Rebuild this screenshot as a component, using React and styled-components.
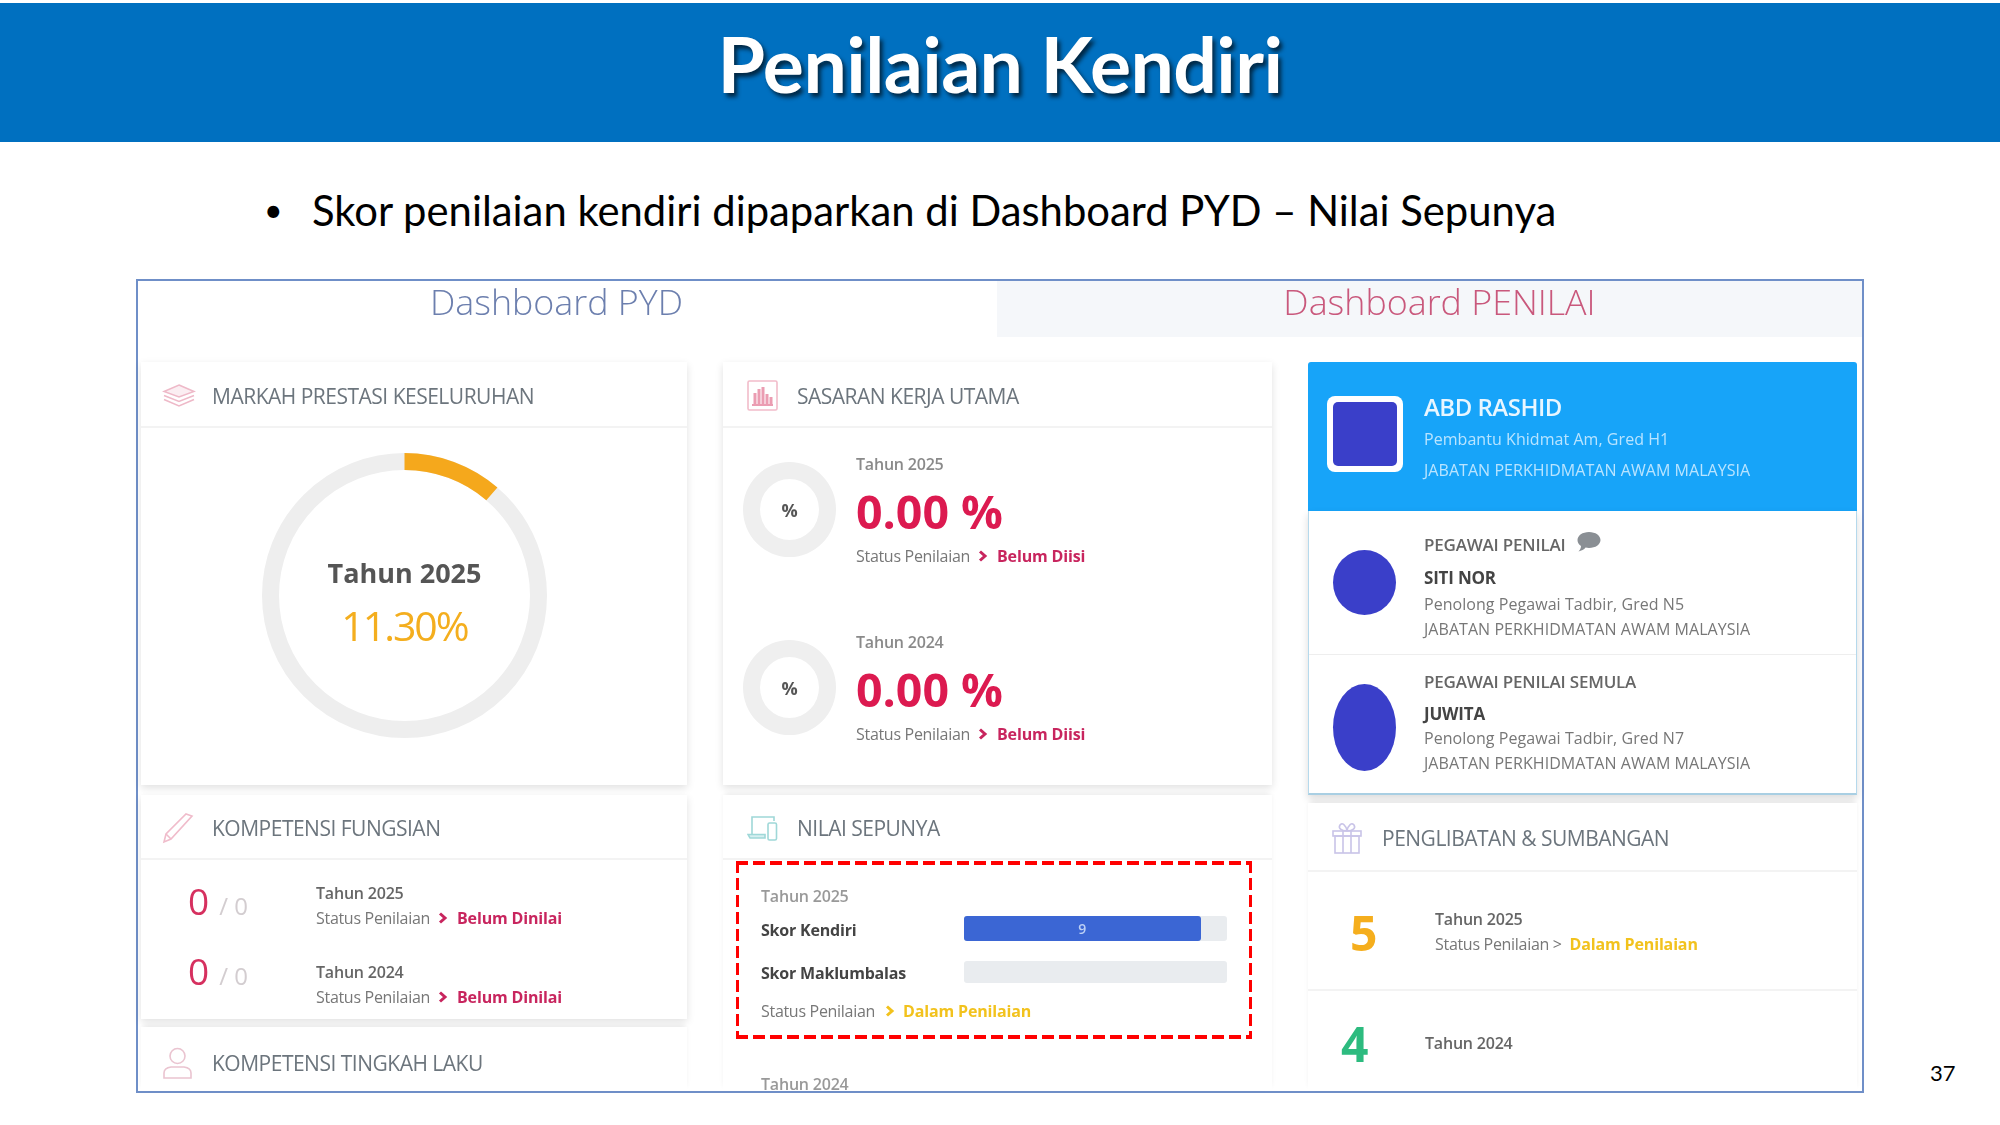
import styled, { createGlobalStyle } from 'styled-components';

const GlobalStyle = createGlobalStyle`
  html, body {
    margin: 0;
    padding: 0;
    background: #fff;
  }
  * {
    box-sizing: border-box;
  }
`;

const UI_FONT = '"Open Sans", "Noto Sans", sans-serif';
const SLIDE_FONT = 'Lato, "Open Sans", sans-serif';

const Page = styled.div`
  width: 2000px;
  height: 1125px;
  overflow: hidden;
  background: #fff;
  padding-top: 3px;
  font-family: ${UI_FONT};
`;

const TitleBar = styled.header`
  height: 139px;
  background: #0070c0;
  display: flex;
  justify-content: center;
  align-items: center;
  padding-bottom: 20px;
`;

const SlideTitle = styled.h1`
  margin: 0;
  font-family: ${SLIDE_FONT};
  font-size: 77px;
  font-weight: 700;
  letter-spacing: -0.6px;
  color: #fff;
  text-shadow: 3px 4px 4px rgba(0, 0, 0, 0.65);
`;

const BulletRow = styled.div`
  height: 137px;
  padding: 43px 0 0 264px;
  display: flex;
  font-family: ${SLIDE_FONT};
  font-size: 41.8px;
  line-height: 50px;
  color: #000;
`;

const BulletDot = styled.span`
  width: 48px;
  font-size: 32px;
`;

const BottomRow = styled.div`
  display: flex;
  align-items: flex-end;
  padding-left: 136px;
`;

const Frame = styled.section`
  width: 1728px;
  height: 814px;
  border: 2px solid #6f8fc8;
  background: #fff;
`;

const TabRow = styled.div`
  display: flex;
  height: 56px;
  filter: blur(0.4px);
`;

const Tab = styled.div`
  font-weight: 300;
  font-size: 35.8px;
  line-height: 40px;
  text-align: center;
  color: ${(p) => (p.$active ? '#6c7fae' : '#c9587c')};
  background: ${(p) => (p.$active ? '#fff' : '#f5f7fa')};
  width: ${(p) => (p.$active ? '859px' : '865px')};
  padding-right: ${(p) => (p.$active ? '22px' : '0')};
  padding-left: ${(p) => (p.$active ? '0' : '20px')};
`;

const Board = styled.div`
  display: grid;
  grid-template-columns: 546px 549px 549px;
  column-gap: 36px;
  height: 754px;
  padding: 25px 0 0 3px;
  filter: blur(0.4px);
`;

const Column = styled.div`
  display: flex;
  flex-direction: column;
`;

/* $flush cards run into the bottom edge of the frame, so their shadow must stay inside it */
const Card = styled.div`
  background: #fff;
  box-shadow: ${(p) => (p.$flush ? '0 -3px 6px -2px rgba(0, 0, 0, 0.1)' : '0 3px 8px rgba(0, 0, 0, 0.12)')};
  flex: none;
  height: ${(p) => p.$height}px;
  margin-top: ${(p) => p.$top || 0}px;
`;

const CardHeader = styled.div`
  height: ${(p) => p.$height}px;
  display: flex;
  align-items: center;
  padding: ${(p) => p.$pad || 3}px 0 0 ${(p) => p.$inset || 24}px;
  border-bottom: ${(p) => (p.$open ? '0' : '2px solid #f3f3f3')};
`;

const IconSlot = styled.span`
  width: 50px;
  flex: none;
  display: flex;
`;

const CardTitle = styled.h3`
  margin: 0;
  font-size: 21px;
  font-weight: 400;
  letter-spacing: -0.5px;
  color: #6c757d;
`;

/* overall score */
const RingWrap = styled.div`
  display: grid;
  width: 285px;
  height: 285px;
  margin: 25px 0 0 121px;
`;

const RingSvg = styled.svg`
  grid-area: 1 / 1;
`;

const RingLabel = styled.div`
  grid-area: 1 / 1;
  place-self: center;
  padding-top: 12px;
  text-align: center;
`;

const RingYear = styled.div`
  font-size: 27px;
  font-weight: 700;
  line-height: 40px;
  color: #555;
`;

const RingValue = styled.div`
  font-size: 41px;
  font-weight: 500;
  line-height: 52px;
  margin-top: 6px;
  letter-spacing: -2px;
  color: #f4ae1e;
`;

/* sasaran kerja */
const TargetList = styled.div`
  padding-top: 24px;
`;

const TargetRow = styled.div`
  display: flex;
  height: 178px;
  padding-left: 20px;
`;

const SmallRing = styled.div`
  width: 93px;
  height: 95px;
  margin-top: 10px;
  border-radius: 50%;
  border: 17px solid #efefef;
  display: flex;
  align-items: center;
  justify-content: center;
  font-size: 18px;
  font-weight: 700;
  color: #555;
  flex: none;
`;

const TargetText = styled.div`
  padding-left: 20px;
`;

const YearLabel = styled.div`
  font-size: 16px;
  font-weight: 600;
  line-height: ${(p) => p.$lineHeight || 24}px;
  letter-spacing: -0.2px;
  color: ${(p) => p.$color || '#666'};
`;

const BigPercent = styled.div`
  font-size: 46.5px;
  font-weight: 700;
  line-height: 56px;
  margin-top: 7px;
  color: #dc1a50;
`;

const StatusLine = styled.div`
  display: flex;
  align-items: center;
  font-size: 16px;
  line-height: 24px;
  letter-spacing: -0.3px;
  color: #777;
  margin-top: ${(p) => p.$top || 0}px;
`;

const StatusValue = styled.span`
  font-weight: 700;
  letter-spacing: -0.15px;
  margin-left: ${(p) => p.$gap || 0}px;
  color: ${(p) => (p.$tone === 'warn' ? '#f2c21d' : '#c8255e')};
`;

const ChevronBox = styled.svg`
  width: 10px;
  height: 12px;
  margin: 0 ${(p) => p.$after || 9}px 0 ${(p) => p.$before || 8}px;
  color: ${(p) => (p.$tone === 'warn' ? '#f2c21d' : '#c8255e')};
`;

/* kompetensi */
const CompetencyList = styled.div`
  padding: 21px 0 0 47px;
`;

const CompetencyRow = styled.div`
  display: flex;
  height: 79px;
`;

const CompetencyNumber = styled.div`
  width: 128px;
  flex: none;
  margin-top: ${(p) => p.$top}px;
  display: flex;
  align-items: baseline;
  font-size: 37px;
  line-height: 42px;
  color: #d6305f;
`;

const CompetencyTotal = styled.span`
  margin-left: 10px;
  font-size: 24px;
  color: #d3cdd0;
`;

/* nilai sepunya */
const DashedBox = styled.div`
  width: 516px;
  height: 178px;
  margin: 1px 0 0 13px;
  padding: 23px 0 0 25px;
  background:
    repeating-linear-gradient(90deg, #f00 0 12px, transparent 12px 17px) top left / 100% 4px no-repeat,
    repeating-linear-gradient(90deg, #f00 0 12px, transparent 12px 17px) bottom left / 100% 4px no-repeat,
    repeating-linear-gradient(180deg, #f00 0 12px, transparent 12px 17px) top left / 3px 100% no-repeat,
    repeating-linear-gradient(180deg, #f00 0 12px, transparent 12px 17px) top right / 3px 100% no-repeat;
`;

const SkorRow = styled.div`
  display: flex;
  align-items: center;
  margin-top: ${(p) => p.$top}px;
`;

const SkorLabel = styled.div`
  width: 203px;
  flex: none;
  padding-top: 2px;
  font-size: 16px;
  font-weight: 700;
  letter-spacing: -0.2px;
  color: #444;
`;

const SkorTrack = styled.div`
  width: 263px;
  height: ${(p) => p.$height}px;
  background: #e9ecef;
  border-radius: 3px;
`;

const SkorFill = styled.div`
  height: 100%;
  background: #3b66d4;
  border-radius: 3px;
  color: #bcd0f5;
  font-size: 14px;
  font-weight: 600;
  line-height: 25px;
  text-align: center;
`;

const NextYear = styled.div`
  padding: 38px 0 0 38px;
`;

/* profil */
const ProfileCard = styled.div`
  height: 149px;
  background: #17a4f9;
  border-radius: 3px 3px 0 0;
  display: flex;
  align-items: center;
  padding-left: 19px;
`;

const AvatarFrame = styled.div`
  width: 76px;
  height: 76px;
  background: #fff;
  border-radius: 8px;
  padding: 6px;
  flex: none;
  margin: -5px 21px 0 0;
`;

const AvatarSquare = styled.div`
  height: 100%;
  background: #3a3fc9;
  border-radius: 5px;
`;

const ProfileText = styled.div`
  padding-top: 4px;
`;

const ProfileName = styled.div`
  font-size: 24px;
  font-weight: 600;
  line-height: 31px;
  margin-bottom: 2px;
  letter-spacing: -0.5px;
  color: #e8f6ff;
`;

const ProfileLine = styled.div`
  font-size: 16px;
  line-height: 31.5px;
  letter-spacing: 0.05px;
  color: #b9e4ff;
`;

const PeoplePanel = styled.div`
  height: 284px;
  border: 1px solid #b5d9ec;
  border-top: 0;
  border-bottom: 2px solid #a9cfe3;
  box-shadow: 0 4px 8px rgba(0, 0, 0, 0.14);
`;

const PersonRow = styled.div`
  display: flex;
  height: ${(p) => p.$height}px;
  padding: ${(p) => p.$top}px 0 0 24px;
  border-bottom: ${(p) => (p.$last ? '0' : '1px solid #eee')};
`;

const AvatarOval = styled.div`
  width: 63px;
  height: ${(p) => p.$height}px;
  margin-top: ${(p) => p.$top}px;
  border-radius: 50%;
  background: #3a3fc9;
  flex: none;
`;

const PersonText = styled.div`
  padding-left: 28px;
`;

const PersonRole = styled.div`
  display: flex;
  align-items: center;
  font-size: 17px;
  font-weight: 600;
  line-height: 24px;
  letter-spacing: -0.2px;
  color: #666;
`;

const PersonName = styled.div`
  font-size: 17px;
  font-weight: 700;
  line-height: 24px;
  margin: ${(p) => p.$top}px 0 ${(p) => p.$after}px;
  letter-spacing: -0.2px;
  color: #444;
`;

const PersonLine = styled.div`
  font-size: 16px;
  line-height: 25px;
  letter-spacing: 0.05px;
  color: #777;
`;

const BubbleIcon = styled.svg`
  width: 25px;
  height: 22px;
  margin: -6px 0 0 10px;
`;

/* penglibatan */
const InvolvementRow = styled.div`
  display: flex;
  align-items: center;
  height: ${(p) => p.$height}px;
  padding: ${(p) => p.$pad || 0}px 0 0 ${(p) => p.$inset}px;
  border-bottom: ${(p) => (p.$last ? '0' : '2px solid #f3f3f3')};
`;

const InvolvementNumber = styled.div`
  width: ${(p) => p.$width}px;
  flex: none;
  margin-top: ${(p) => p.$top || 0}px;
  font-size: 48px;
  font-weight: 700;
  color: ${(p) => p.$color};
`;

const InvolvementText = styled.div`
  padding-top: 2px;
`;

const PageNumber = styled.div`
  font-family: ${SLIDE_FONT};
  font-size: 22px;
  line-height: 30px;
  margin: 0 0 5px 66px;
  color: #000;
`;

const Chevron = ({ tone, before, after }) => (
  <ChevronBox $tone={tone} $before={before} $after={after} viewBox="0 0 10 12">
    <path d="M2 1.5 L7 6 L2 10.5" fill="none" stroke="currentColor" strokeWidth="3" />
  </ChevronBox>
);

const LayersIcon = () => (
  <svg width="34" height="24" viewBox="0 0 34 24" fill="none" stroke="#eeb9c8" strokeWidth="1.6">
    <path d="M17 1 L32 7.5 L17 13 L2 7.5 Z" fill="#fbeef2" />
    <path d="M2 11.5 L17 17.5 L32 11.5" />
    <path d="M2 15.5 L17 22 L32 15.5" />
  </svg>
);

const ChartIcon = () => (
  <svg width="31" height="31" viewBox="0 0 31 31" fill="none">
    <rect x="1" y="1" width="29" height="29" rx="1.5" stroke="#f2bcca" strokeWidth="1.6" />
    <path d="M8 24 V13 M12 24 V9 M16 24 V7 M20 24 V14 M24 24 V17" stroke="#eb9db2" strokeWidth="3" />
    <path d="M5 25 H26" stroke="#eb9db2" strokeWidth="2" />
  </svg>
);

const PencilIcon = () => (
  <svg width="32" height="32" viewBox="0 0 32 32" fill="none" stroke="#f0bccb" strokeWidth="1.6">
    <path d="M2 30 L4 22 L24 2 L30 4 L9 27 Z" />
    <path d="M4 22 L9 27" />
  </svg>
);

const DevicesIcon = () => (
  <svg width="31" height="26" viewBox="0 0 31 26" fill="none" stroke="#9fd8d8" strokeWidth="1.6">
    <path d="M5 19 V2 H27 V6" />
    <path d="M1 19.5 H18 V23 H3 Z" fill="#d5eff0" />
    <rect x="21" y="8" width="8.5" height="17" rx="1.5" />
  </svg>
);

const PersonIcon = () => (
  <svg width="31" height="32" viewBox="0 0 31 32" fill="none" stroke="#eac4d0" strokeWidth="1.6">
    <circle cx="15.5" cy="9" r="7.5" />
    <path d="M2 31 V26 Q2 21 9 20 H22 Q29 21 29 26 V31 Z" />
  </svg>
);

const GiftIcon = () => (
  <svg width="30" height="32" viewBox="0 0 30 32" fill="none" stroke="#c9c4e8" strokeWidth="1.6">
    <rect x="1" y="9" width="28" height="5" />
    <rect x="3" y="14" width="24" height="17" />
    <path d="M11 9 V31 M19 9 V31" />
    <path d="M15 9 C9 9 6 6 8 3 C10 0 14 3 15 9 C16 3 20 0 22 3 C24 6 21 9 15 9" />
  </svg>
);

const BubbleGlyph = () => (
  <BubbleIcon viewBox="0 0 25 22">
    <path
      d="M13 1 C19.5 1 24.5 4.6 24.5 9 C24.5 13.4 19.5 17 13 17 C11.8 17 10.7 16.9 9.6 16.6 C8 18.6 5.6 20 2.5 20.5 C4 19 5 17 5 15 C2.6 13.5 1.5 11.4 1.5 9 C1.5 4.6 6.5 1 13 1 Z"
      fill="#8a8f94"
    />
  </BubbleIcon>
);

const Header = ({ icon, title, height, inset, pad, open }) => (
  <CardHeader $height={height} $inset={inset} $pad={pad} $open={open}>
    <IconSlot>{icon}</IconSlot>
    <CardTitle>{title}</CardTitle>
  </CardHeader>
);

const targets = [
  { year: 'Tahun 2025' },
  { year: 'Tahun 2024' },
];

const competencies = [
  { year: 'Tahun 2025', top: -1 },
  { year: 'Tahun 2024', top: -10 },
];

const App = () => {
  const radius = 134;
  const circumference = 2 * Math.PI * radius;

  return (
    <Page>
      <GlobalStyle />
      <TitleBar>
        <SlideTitle>Penilaian Kendiri</SlideTitle>
      </TitleBar>
      <BulletRow>
        <BulletDot>•</BulletDot>
        <span>Skor penilaian kendiri dipaparkan di Dashboard PYD – Nilai Sepunya</span>
      </BulletRow>
      <BottomRow>
        <Frame>
          <TabRow>
            <Tab $active>Dashboard PYD</Tab>
            <Tab>Dashboard PENILAI</Tab>
          </TabRow>
          <Board>
            <Column>
              <Card $height={423}>
                <Header icon={<LayersIcon />} title="MARKAH PRESTASI KESELURUHAN" height={66} inset={21} />
                <RingWrap>
                  <RingSvg width="285" height="285" viewBox="0 0 285 285" fill="none">
                    <circle cx="142.5" cy="142.5" r={radius} stroke="#eeeeee" strokeWidth="17" />
                    <circle
                      cx="142.5"
                      cy="142.5"
                      r={radius}
                      stroke="#f5a81c"
                      strokeWidth="17"
                      strokeDasharray={`${circumference * 0.113} ${circumference}`}
                      transform="rotate(-90 142.5 142.5)"
                    />
                  </RingSvg>
                  <RingLabel>
                    <RingYear>Tahun 2025</RingYear>
                    <RingValue>11.30%</RingValue>
                  </RingLabel>
                </RingWrap>
              </Card>
              <Card $height={224} $top={10}>
                <Header icon={<PencilIcon />} title="KOMPETENSI FUNGSIAN" height={65} inset={21} />
                <CompetencyList>
                  {competencies.map((c) => (
                    <CompetencyRow key={c.year}>
                      <CompetencyNumber $top={c.top}>
                        0<CompetencyTotal>/ 0</CompetencyTotal>
                      </CompetencyNumber>
                      <div>
                        <YearLabel>{c.year}</YearLabel>
                        <StatusLine $top={1}>
                          Status Penilaian
                          <Chevron />
                          <StatusValue>Belum Dinilai</StatusValue>
                        </StatusLine>
                      </div>
                    </CompetencyRow>
                  ))}
                </CompetencyList>
              </Card>
              <Card $height={64} $top={8} $flush>
                <Header icon={<PersonIcon />} title="KOMPETENSI TINGKAH LAKU" height={64} inset={21} pad={8} open />
              </Card>
            </Column>

            <Column>
              <Card $height={423}>
                <Header icon={<ChartIcon />} title="SASARAN KERJA UTAMA" height={66} />
                <TargetList>
                  {targets.map((t) => (
                    <TargetRow key={t.year}>
                      <SmallRing>%</SmallRing>
                      <TargetText>
                        <YearLabel $color="#8a8a8a">{t.year}</YearLabel>
                        <BigPercent>0.00 %</BigPercent>
                        <StatusLine $top={5}>
                          Status Penilaian
                          <Chevron />
                          <StatusValue>Belum Diisi</StatusValue>
                        </StatusLine>
                      </TargetText>
                    </TargetRow>
                  ))}
                </TargetList>
              </Card>
              <Card $height={296} $top={10} $flush>
                <Header icon={<DevicesIcon />} title="NILAI SEPUNYA" height={65} />
                <DashedBox>
                  <YearLabel $color="#999">Tahun 2025</YearLabel>
                  <SkorRow $top={8}>
                    <SkorLabel>Skor Kendiri</SkorLabel>
                    <SkorTrack $height={25}>
                      <SkorFill style={{ width: '90%' }}>9</SkorFill>
                    </SkorTrack>
                  </SkorRow>
                  <SkorRow $top={19}>
                    <SkorLabel>Skor Maklumbalas</SkorLabel>
                    <SkorTrack $height={22} />
                  </SkorRow>
                  <StatusLine $top={15}>
                    Status Penilaian
                    <Chevron tone="warn" before={10} after={8} />
                    <StatusValue $tone="warn">Dalam Penilaian</StatusValue>
                  </StatusLine>
                </DashedBox>
                <NextYear>
                  <YearLabel $color="#999" $lineHeight={14}>Tahun 2024</YearLabel>
                </NextYear>
              </Card>
            </Column>

            <Column>
              <ProfileCard>
                <AvatarFrame>
                  <AvatarSquare />
                </AvatarFrame>
                <ProfileText>
                  <ProfileName>ABD RASHID</ProfileName>
                  <ProfileLine>Pembantu Khidmat Am, Gred H1</ProfileLine>
                  <ProfileLine>JABATAN PERKHIDMATAN AWAM MALAYSIA</ProfileLine>
                </ProfileText>
              </ProfileCard>
              <PeoplePanel>
                <PersonRow $height={144} $top={22}>
                  <AvatarOval $height={65} $top={17} />
                  <PersonText>
                    <PersonRole>
                      PEGAWAI PENILAI
                      <BubbleGlyph />
                    </PersonRole>
                    <PersonName $top={9} $after={2}>SITI NOR</PersonName>
                    <PersonLine>Penolong Pegawai Tadbir, Gred N5</PersonLine>
                    <PersonLine>JABATAN PERKHIDMATAN AWAM MALAYSIA</PersonLine>
                  </PersonText>
                </PersonRow>
                <PersonRow $height={138} $top={15} $last>
                  <AvatarOval $height={87} $top={14} />
                  <PersonText>
                    <PersonRole>PEGAWAI PENILAI SEMULA</PersonRole>
                    <PersonName $top={8} $after={0}>JUWITA</PersonName>
                    <PersonLine>Penolong Pegawai Tadbir, Gred N7</PersonLine>
                    <PersonLine>JABATAN PERKHIDMATAN AWAM MALAYSIA</PersonLine>
                  </PersonText>
                </PersonRow>
              </PeoplePanel>
              <Card $height={288} $top={8} $flush>
                <Header icon={<GiftIcon />} title="PENGLIBATAN & SUMBANGAN" height={69} />
                <InvolvementRow $height={119} $inset={42}>
                  <InvolvementNumber $width={85} $top={4} $color="#f5ae1d">5</InvolvementNumber>
                  <InvolvementText>
                    <YearLabel>Tahun 2025</YearLabel>
                    <StatusLine $top={1}>
                      Status Penilaian &gt;&nbsp;
                      <StatusValue $tone="warn" $gap={4}>Dalam Penilaian</StatusValue>
                    </StatusLine>
                  </InvolvementText>
                </InvolvementRow>
                <InvolvementRow $height={100} $inset={33} $pad={4} $last>
                  <InvolvementNumber $width={84} $color="#2dbb7f">4</InvolvementNumber>
                  <YearLabel>Tahun 2024</YearLabel>
                </InvolvementRow>
              </Card>
            </Column>
          </Board>
        </Frame>
        <PageNumber>37</PageNumber>
      </BottomRow>
    </Page>
  );
};

export default App;
